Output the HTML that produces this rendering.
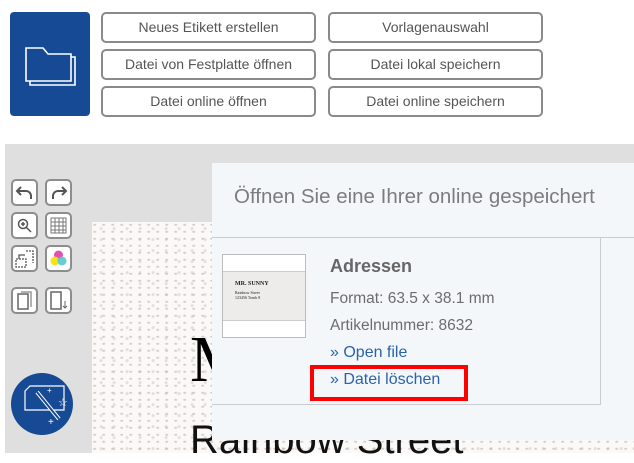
<!DOCTYPE html>
<html><head><meta charset="utf-8"><style>
*{margin:0;padding:0;box-sizing:border-box}
body{width:634px;height:453px;overflow:hidden;background:#fff;position:relative;font-family:"Liberation Sans",sans-serif}
.a{position:absolute}
.tile{left:10px;top:12px;width:80px;height:104px;background:#174a94;border-radius:4px}
.btn{position:absolute;width:215px;height:31px;border:2px solid #8a8a8a;border-radius:5px;background:#fff;color:#555;font-size:14px;text-align:center;line-height:27px}
.gray{left:5px;top:144px;width:629px;height:309px;background:#dfdfdf}
.tb{position:absolute;width:27px;height:27px;border:2px solid #8d8d8d;border-radius:5px;background:#fff}
.canvas{left:92px;top:222px;width:542px;height:231px;background:#faf9f8;
background-image:radial-gradient(ellipse at 30% 40%,rgba(185,170,160,.55) 1px,transparent 2px),radial-gradient(circle at 70% 60%,rgba(185,170,160,.35) 1px,transparent 2px);background-size:9px 7px,13px 11px}
.modal{left:212px;top:163px;width:422px;height:277px;background:#f4f7fa}
</style></head><body>
<div class="a tile"><svg width="80" height="104" viewBox="0 0 80 104"><path d="M16 36h17l5 6h23v27H16z" fill="none" stroke="#fff" stroke-width="1.6"/><path d="M61 45h4v28H20v-4" fill="none" stroke="#fff" stroke-width="1.6"/></svg></div>
<div class="btn" style="left:101px;top:12px">Neues Etikett erstellen</div>
<div class="btn" style="left:101px;top:49px">Datei von Festplatte öffnen</div>
<div class="btn" style="left:101px;top:86px">Datei online öffnen</div>
<div class="btn" style="left:328px;top:12px">Vorlagenauswahl</div>
<div class="btn" style="left:328px;top:49px">Datei lokal speichern</div>
<div class="btn" style="left:328px;top:86px">Datei online speichern</div>
<div class="a gray"></div>
<div class="a canvas"></div>
<div class="a" style="left:190px;top:322px;font-family:'Liberation Serif',serif;font-size:66px;color:#000">M</div>
<div class="a" style="left:190px;top:418px;font-size:40px;color:#111">Rainbow Street</div>
<div class="tb" style="left:11px;top:179px"><svg width="23" height="23"><path d="M8 6l-4 4 4 4M4 10h9a5 5 0 0 1 5 5v3" fill="none" stroke="#555" stroke-width="2"/></svg></div>
<div class="tb" style="left:45px;top:179px"><svg width="23" height="23"><path d="M15 6l4 4-4 4M19 10h-8a5 5 0 0 0-5 5v3" fill="none" stroke="#555" stroke-width="2"/></svg></div>
<div class="tb" style="left:11px;top:212px"><svg width="23" height="23"><circle cx="10" cy="10" r="4.5" fill="none" stroke="#555" stroke-width="1.5"/><path d="M13 13l5 5M8 10h4M10 8v4" stroke="#555" stroke-width="1.5"/></svg></div>
<div class="tb" style="left:45px;top:212px"><svg width="23" height="23"><path d="M4 4h15v15H4zM4 8h15M4 12h15M4 16h15M8 4v15M12 4v15M16 4v15" fill="none" stroke="#777" stroke-width="1"/></svg></div>
<div class="tb" style="left:11px;top:245px"><svg width="23" height="23"><path d="M3 12h10v8H3zM13 4h7v12" fill="none" stroke="#555" stroke-width="1.3" stroke-dasharray="2 1"/><path d="M6 12V8h6" fill="none" stroke="#555" stroke-width="1.3"/></svg></div>
<div class="tb" style="left:45px;top:245px"><svg width="23" height="23"><circle cx="11.5" cy="8" r="4.5" fill="#e64fb0"/><circle cx="8" cy="14" r="4.5" fill="#f5e000" opacity=".9"/><circle cx="15" cy="14" r="4.5" fill="#55c8d0" opacity=".9"/></svg></div>
<div class="tb" style="left:11px;top:287px"><svg width="23" height="23"><path d="M5 5h10v15H5z" fill="none" stroke="#666" stroke-width="1.5"/><path d="M8 3h10v15" fill="none" stroke="#999" stroke-width="1.5"/></svg></div>
<div class="tb" style="left:45px;top:287px"><svg width="23" height="23"><path d="M4 3h10v17H4z" fill="none" stroke="#666" stroke-width="1.5"/><path d="M18 12v7M16 17l2 2 2-2" fill="none" stroke="#666" stroke-width="1"/></svg></div>
<div class="a" style="left:11px;top:373px;width:62px;height:62px;border-radius:50%;background:#174a94"><svg width="62" height="62"><path d="M14 18l5-5h34v24H14z" fill="none" stroke="#fff" stroke-width="1.2"/><path d="M26 19l22 27" stroke="#fff" stroke-width="4"/><path d="M26 19l22 27" stroke="#174a94" stroke-width="2"/><text x="47" y="33" fill="#fff" font-size="11">☆</text><text x="37" y="52" fill="#fff" font-size="10">+</text><text x="36" y="20" fill="#fff" font-size="8">+</text></svg></div>
<div class="a modal">
<div style="height:75px;border-bottom:1px solid #c9ccd0;padding:22px 0 0 22px;color:#7c7c7c;white-space:nowrap;font-size:20.5px">Öffnen Sie eine Ihrer online gespeichert</div>
<div class="a" style="left:0;top:75px;width:389px;height:167px;border-right:1px solid #c9ccd0;border-bottom:1px solid #c9ccd0"></div>
<div class="a" style="left:10px;top:91px;width:84px;height:84px;border:1px solid #bbb;background:#fff"><div style="margin-top:16px;height:50px;background:#eeeceb;border-top:1px solid #ccc;border-bottom:1px solid #ccc;padding:9px 0 0 12px;font-family:'Liberation Serif',serif;font-size:6px;font-weight:bold;color:#222">MR. SUNNY<div style="font-weight:normal;font-size:4px;margin-top:3px">Rainbow Street<br>123456 Tomb 8</div></div></div>
<div class="a" style="left:118px;top:93px;font-size:18px;font-weight:bold;color:#666">Adressen</div>
<div class="a" style="left:118px;top:127px;font-size:15.5px;color:#6c6c6c">Format: 63.5 x 38.1 mm</div>
<div class="a" style="left:118px;top:154px;font-size:15.5px;color:#6c6c6c">Artikelnummer: 8632</div>
<div class="a" style="left:118px;top:181px;font-size:16px;color:#2b62ad">» Open file</div>
<div class="a" style="left:118px;top:208px;font-size:16px;color:#2b62ad">» Datei löschen</div>
<div class="a" style="left:98px;top:202px;width:158px;height:36px;border:4px solid #f00"></div>
</div>
</body></html>
